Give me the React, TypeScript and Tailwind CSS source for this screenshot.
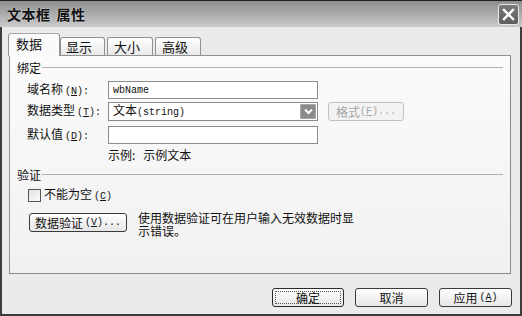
import React from "react";

const M = ({ children }: { children: React.ReactNode }) => (
  <span className="font-['Liberation_Mono','Noto_Sans_CJK_SC',monospace] text-[10px]">{children}</span>
);

const Acc = ({ k }: { k: string }) => (
  <M>
    (<u className="underline-offset-1">{k}</u>)
  </M>
);

function Btn({
  children,
  w,
  def,
}: {
  children: React.ReactNode;
  w: string;
  def?: boolean;
}) {
  return (
    <div
      className={`${w} h-[19px] rounded-[3px] border ${def ? "border-[#2a2a2a]" : "border-[#3a3a3a]"} bg-gradient-to-b from-[#ffffff] to-[#e6e6e6] flex items-center justify-center p-[2px] shrink-0`}
    >
      <div
        className={`w-full h-full flex items-center justify-center leading-[12px] text-[12px] text-[#111] ${def ? "border border-dotted border-[#555]" : ""}`}
      >
        {children}
      </div>
    </div>
  );
}

export default function App() {
  return (
    <div className="w-[522px] h-[316px] overflow-hidden bg-[#3c3c3c] font-['Noto_Sans_CJK_SC',sans-serif] text-[12px] text-[#111]">
      <div className="mx-[2px] mb-[2px] h-[314px] bg-[#ebebeb] flex flex-col">
        {/* title bar */}
        <div className="h-[27px] -mx-[2px] border-t border-[#222] bg-gradient-to-b from-[#8f8f8f] via-[#ababab] to-[#cbcbcb] flex items-center justify-between pl-[7px] pr-[3px]">
          <div className="text-[14px] font-bold leading-[14px] text-[#101010] [text-shadow:0_0_2px_#e0e0e0] tracking-[0.5px] flex">
            <span>文本框</span>
            <span className="ml-[6px]">属性</span>
          </div>
          <div className="w-[21px] h-[21px] rounded-[3px] border border-[#e8e8e8] bg-gradient-to-b from-[#7a7a7a] to-[#5e5e5e] flex items-center justify-center">
            <svg width="13" height="13" viewBox="0 0 13 13">
              <path d="M2 2 L11 11 M11 2 L2 11" stroke="#fff" strokeWidth="2.4" strokeLinecap="square" />
            </svg>
          </div>
        </div>

        {/* tabs */}
        <div className="mt-[6px] ml-[6px] h-[22px] flex items-end relative z-10">
          <div className="w-[52px] h-[23px] -mb-[1px] rounded-t-[3px] border border-b-0 border-[#919191] border-t-[#a8a8a8] bg-[#fafafa] pl-[7px] pt-[3px] leading-[14px] text-[13px]">
            数据
          </div>
          <div className="w-[45px] h-[18px] rounded-t-[3px] border border-b-0 border-[#919191] bg-gradient-to-b from-[#ffffff] to-[#e8e8e8] pl-[5px] pt-[2px] leading-[14px] text-[13px]">
            显示
          </div>
          <div className="ml-[2px] w-[46px] h-[18px] rounded-t-[3px] border border-b-0 border-[#919191] bg-gradient-to-b from-[#ffffff] to-[#e8e8e8] pl-[6px] pt-[2px] leading-[14px] text-[13px]">
            大小
          </div>
          <div className="ml-[2px] w-[46px] h-[18px] rounded-t-[3px] border border-b-0 border-[#919191] bg-gradient-to-b from-[#ffffff] to-[#e8e8e8] pl-[6px] pt-[2px] leading-[14px] text-[13px]">
            高级
          </div>
        </div>

        {/* panel */}
        <div className="ml-[7px] w-[502px] h-[219px] border border-[#919191] border-b-[#888] border-r-[#888] bg-gradient-to-b from-[#fbfbfb] to-[#f1f1f1] px-[7px] pt-[6px] flex flex-col">
          <div className="flex items-center h-[12px] leading-[12px]">
            <span>绑定</span>
            <div className="flex-1 ml-[1px] h-px bg-[#b0b0b0] mt-[-1px]" />
          </div>

          <div className="mt-[7px] flex items-center h-[18px] ml-[10px]">
            <div className="w-[81px] leading-[12px] whitespace-nowrap">
              域名称<span className="inline-block w-[2px]" />
              <Acc k="N" />
              <M>:</M>
            </div>
            <div className="w-[210px] h-[18px] border border-[#8c8c8c] bg-white flex items-center pl-[4px]">
              <M>wbName</M>
            </div>
          </div>

          <div className="mt-[3px] flex items-center h-[19px] ml-[10px]">
            <div className="w-[81px] leading-[12px] whitespace-nowrap">
              数据类型<span className="inline-block w-[2px]" />
              <Acc k="T" />
              <M>:</M>
            </div>
            <div className="w-[210px] h-[19px] border border-[#8c8c8c] bg-white flex items-center pl-[4px] pr-[1px]">
              <span className="flex-1 leading-[12px]">
                文本<M>(string)</M>
              </span>
              <div className="w-[16px] h-[15px] bg-[#8a8a8a] rounded-[1px] border border-[#a8a8a8] flex items-center justify-center">
                <svg width="9" height="7" viewBox="0 0 9 7">
                  <path d="M1 1.5 L4.5 5 L8 1.5" stroke="#fff" strokeWidth="2" fill="none" />
                </svg>
              </div>
            </div>
            <div className="ml-[10px] w-[76px] h-[19px] rounded-[3px] border border-[#c2c2c2] bg-[#f3f3f3] flex items-center justify-center text-[#a4a4a4] leading-[12px]">
              格式<Acc k="F" />
              <M>...</M>
            </div>
          </div>

          <div className="mt-[5px] flex items-center h-[18px] ml-[10px]">
            <div className="w-[81px] leading-[12px] whitespace-nowrap">
              默认值<span className="inline-block w-[2px]" />
              <Acc k="D" />
              <M>:</M>
            </div>
            <div className="w-[210px] h-[18px] border border-[#8c8c8c] bg-white" />
          </div>

          <div className="mt-[5px] ml-[91px] leading-[12px] h-[12px] flex">
            <span>示例:</span>
            <span className="ml-[8px]">示例文本</span>
          </div>

          <div className="mt-[8px] flex items-center h-[12px] leading-[12px]">
            <span>验证</span>
            <div className="flex-1 ml-[1px] h-px bg-[#b0b0b0] mt-[-1px]" />
          </div>

          <div className="mt-[8px] ml-[11px] flex items-center h-[13px]">
            <div className="w-[13px] h-[13px] border border-[#555] bg-gradient-to-br from-[#e2e2e2] to-[#fbfbfb]" />
            <span className="ml-[3px] leading-[12px]">
              不能为空<span className="inline-block w-[2px]" />
              <Acc k="C" />
            </span>
          </div>

          <div className="mt-[11px] ml-[12px] flex items-start">
            <Btn w="w-[98px]">
              数据验证<span className="inline-block w-[2px]" />
              <Acc k="V" />
              <M>...</M>
            </Btn>
            <p className="ml-[11px] -mt-[2px] leading-[13px] w-[217px] break-all">
              使用数据验证可在用户输入无效数据时显示错误。
            </p>
          </div>
        </div>

        {/* buttons */}
        <div className="mt-[14px] flex justify-end pr-[8px] gap-[11px]">
          <Btn w="w-[72px]" def>
            确定
          </Btn>
          <Btn w="w-[73px]">取消</Btn>
          <Btn w="w-[73px]">
            应用<span className="inline-block w-[2px]" />
            <Acc k="A" />
          </Btn>
        </div>
      </div>
    </div>
  );
}
